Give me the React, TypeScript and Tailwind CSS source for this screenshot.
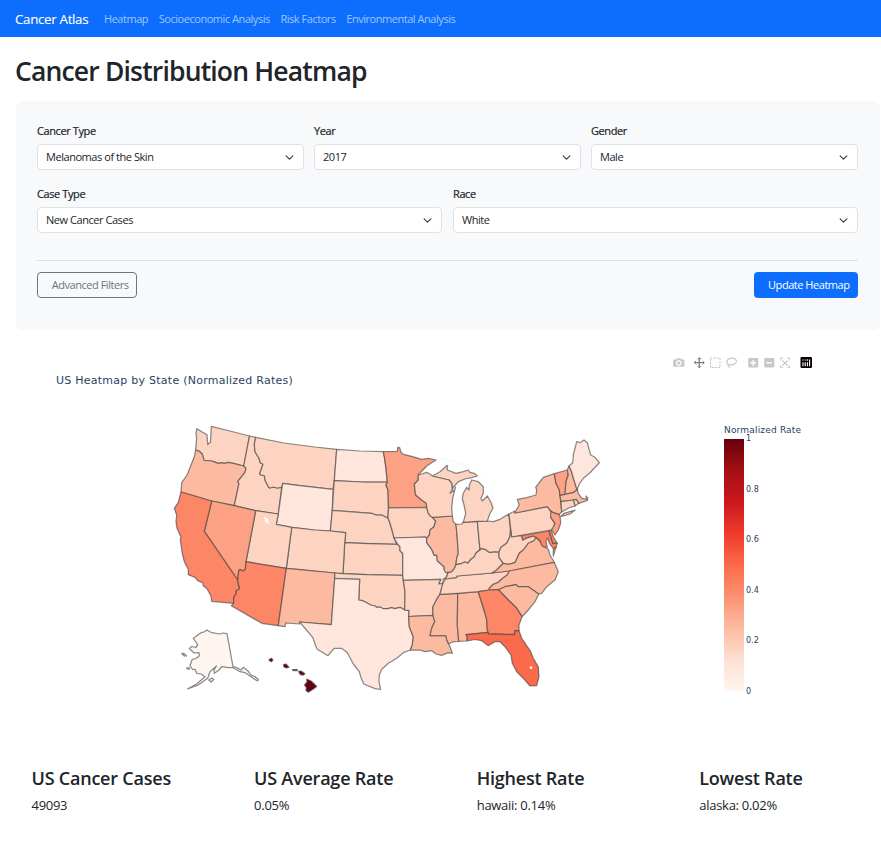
import React from "react";

const UI = "font-['Open_Sans','Segoe_UI',sans-serif]";
const PLOT = "font-['DejaVu_Sans',Verdana,sans-serif]";

const T1 = "#fee6dc";
const T2 = "#fdd3c1";
const T3 = "#fcbaa1";
const T4 = "#fca183";
const T5 = "#fc8666";
const T6 = "#fb6a4a";

const states: [string, string, string][] = [
  ["WA", T2, "196.7,428.7 207,434.7 207.7,444.5 210.5,442 211.3,426.3 230,431 249.5,436 243.7,466 234.3,463.7 228.3,462.3 225,463.3 221.7,462.8 218,463.4 215,462.2 211.7,461 204,460.3 202.3,454.3 199.3,451.3 195.7,450 196,445 196.7,438.3 196,434.3"],
  ["OR", T3, "195.7,450 199.3,451.3 202.3,454.3 204,460.3 211.7,461 215,462.2 218,463.4 221.7,462.8 225,463.3 228.3,462.3 234.3,463.7 243.7,466 246,468.3 245,472.3 237.7,481.7 239,483.3 234.3,505.7 211.7,501 181,492 181.7,482.7 187,475 191,465 194.3,456.7"],
  ["ID", T2, "249.5,436 255.7,437.3 254.3,444.3 255,451.7 259,458.3 260.3,462.7 263,464.3 259.7,473.7 261,475 264.3,475.7 265,480 268.3,486.7 270,488 273.3,487 277,488 281.7,487.3 278.3,514 255.7,510.7 234.3,505.7 239,483.3 237.7,481.7 245,472.3 246,468.3 243.7,466"],
  ["MT", T2, "255.7,437.3 284,443 315,447 336.7,449.3 334.3,480.7 333,489.3 300,485.7 282.7,483.3 281.7,487.3 277,488 273.3,487 270,488 268.3,486.7 265,480 264.3,475.7 261,475 259.7,473.7 263,464.3 260.3,462.7 259,458.3 255,451.7 254.3,444.3"],
  ["WY", T1, "282.7,483.3 300,485.7 333,489.3 332.3,510.3 330.3,531 315,530 291.7,527.3 276.3,524.3 278.3,514"],
  ["ND", T1, "336.7,449.3 360,451 383.3,451.7 384.3,456.7 386,468.3 387.3,482 362.3,482 334.3,480.7"],
  ["SD", T2, "334.3,480.7 362.3,482 387.3,482 386,485 388,490 388.5,507.7 387.7,517.7 386,517.3 381.7,515 376,515 371.7,513.3 332.3,510.3"],
  ["NE", T2, "332.3,510.3 371.7,513.3 376,515 381.7,515 386,517.3 388,517.7 390,523.3 392.5,531.7 394,537.7 396,542.7 397.7,544.3 368.3,543.7 344.7,542.7 345.7,532.7 330.3,531"],
  ["KS", T2, "344.7,542.7 368.3,543.7 397.7,544.3 400,546.7 400,550.7 402.7,553.3 402.7,575.3 366.7,574.7 343,573.7"],
  ["CO", T2, "291.7,527.3 315,530 330.3,531 345.7,532.7 344.7,542.7 343,573.7 334.7,573 300,569.7 286.3,568.3"],
  ["UT", T2, "255.7,510.7 278.3,514 276.3,524.3 291.7,527.3 286.3,568.3 246,561.7"],
  ["NV", T4, "211.7,501 234.3,505.7 255.7,510.7 246,561.7 245.3,569.3 243.3,571 240,569.7 238.7,570.7 237.7,580 204.3,531.3"],
  ["CA", T5, "181,492 211.7,501 204.3,531.3 237.7,580 238.3,584 239.7,588.7 236.3,590.7 236,594 233.7,597.3 233.7,603.3 211.7,601.3 211,596 206.7,588.3 203.3,586 202.7,582.7 197.7,580.7 195,577.3 188.3,574.7 188.3,569.3 184.3,561.7 182.3,553.3 180.3,540 181,537.3 177,528.3 176,521.7 176.7,515 174.3,508.3 178.3,502.3"],
  ["AZ", T5, "246,561.7 286.3,568.3 278.3,625.7 261.7,623.3 231.3,605.7 233.7,603.3 233.7,597.3 236,594 236.3,590.7 239.7,588.7 238.3,584 237.7,580 238.7,570.7 240,569.7 243.3,571 245.3,569.3"],
  ["NM", T3, "286.3,568.3 300,569.7 334.7,573 334.7,578.3 331.3,624.7 299.7,622 299.7,624 285.7,623 285,626.7 278.3,625.7"],
  ["OK", T2, "334.7,573 343,573.7 366.7,574.7 402.7,575.3 403.3,580.3 405,591.7 404.7,610 400,607.3 395,608.7 391,607.6 388.3,608.7 383.3,608.7 380,607 377,607.4 375,606 370.7,605 366.7,602.7 362.7,600.7 358.7,600 359.7,579.3 334.7,578.3"],
  ["TX", T1, "334.7,578.3 359.7,579.3 358.7,600 362.7,600.7 366.7,602.7 370.7,605 375,606 377,607.4 380,607 383.3,608.7 388.3,608.7 391,607.6 395,608.7 400,607.3 404.7,610 409,610.3 408.7,616.7 409.3,626.7 413.3,636.7 412.3,645 410.3,650 403.3,652.7 396.7,658.3 388.3,663.3 381.7,669.3 379.3,675 379,681.7 380.7,689.5 375,688.7 363.7,684 360.7,676.7 359.3,671.7 353.3,664 347.3,652.7 341.7,648.3 334,648.3 328,655.7 317.3,649.3 316,646.7 312.7,637.3 299.7,622 331.3,624.7"],
  ["MN", T4, "383.3,451.7 397.3,451.3 397.7,447.3 399.7,447.7 401,452.3 403.3,454.3 411.7,456.3 421.7,459.3 428.3,458.3 436,460 426.7,466 420.7,472.3 418.3,475 418.3,480 414.3,484.3 415,490 415.7,495 421.7,500 426.3,503.3 426.7,507.3 388.5,508 388,490 386,485 387.3,482 386,468.3 384.3,456.7"],
  ["IA", T2, "388.5,508 426.7,507.3 428,512.7 430,515.7 432.3,517 435.7,521 434,526.7 430,530 429.3,535 426.7,538.3 425,537 394,538 392.5,531.7 390,523.3 388,517.7"],
  ["MO", T1, "394,538 425,537 426.7,538.3 426.7,542.7 431.7,549.3 434,555 436.7,555 437.3,560.7 444,566.7 444.3,570 447.7,572.7 446.7,576.7 443.3,579 442.7,583.5 438.7,584 440.7,579.3 403.3,580.3 402.7,575.3 402.7,553.3 400,550.7 400,546.7 397.7,544.3"],
  ["AR", T2, "403.3,580.3 440.7,579.3 438.7,584 442.7,583.5 442.7,585 440,594 437.3,598.3 432.7,607.3 433,615.3 408.7,616.5 409,610.3 404.7,610 405,591.7"],
  ["LA", T3, "408.7,616.5 433,615.3 434.7,621.7 431.7,628.3 430,635.7 446,635.7 446.7,640 450,646.7 452.3,653.3 448.3,652.7 441.7,655.3 436,654 431.7,650.7 425,651.7 420,650 413.3,650 410.3,650 412.3,645 413.3,636.7 409.3,626.7"],
  ["MS", T3, "440,594.3 457.7,593.3 457.3,625 458.7,641.3 453.3,641.7 450,643.3 448.6,643.6 446.7,640 446,635.7 430,635.7 431.7,628.3 434.7,621.7 433,615.3 432.7,607.3 437.3,598.3"],
  ["AL", T3, "457.7,593.3 478.3,591.7 485,613.3 486.7,619.3 487.3,630 488.3,632.3 466,634.7 467.3,637.3 466.7,641 458.7,641.3 457.3,625"],
  ["TN", T2, "445,579 456,577.7 457.3,576 492,573 509.3,571 507.3,575 502.7,578.3 498.3,582.3 493.3,584.3 489.3,588.3 489.3,590 478.3,591.7 457.7,593.3 440,594.3 442.3,585"],
  ["KY", T2, "445,579 446.7,576.7 448.3,572.3 451.7,571.7 454.3,568.3 456,564.3 461.7,563.3 465,561.7 467.7,563 470.7,559.3 474,556.7 476,552.7 480,550 481,548.3 485,549.3 489.3,552.3 495,551.7 499,552 499,557.3 503.3,563.3 496.7,570 492,573 457.3,576 456,577.7"],
  ["IL", T3, "432.3,517.3 452.3,516 453.3,521.7 456,524.3 457,535 458.3,553.3 456.7,558.3 456,564.3 454.3,568.3 451.7,571.7 448.3,572.3 445.7,572.7 444.3,570 444,566.7 437.3,560.7 436.7,555 434,555 431.7,549.3 426.7,542.7 426.7,538.3 429.3,535 430,530 434,526.7 435.7,521"],
  ["IN", T2, "456,524.3 461.7,524 463.3,522.3 477.3,521.3 480,549.5 476,552.7 474,556.7 470.7,559.3 467.7,563 465,561.7 461.7,563.3 456,564.3 456.7,558.3 458.3,553.3 457,535"],
  ["OH", T2, "477.3,521.3 487.3,521 493.3,521.7 500,519.3 508.7,514 510.5,530 510,536.7 506.7,543.3 501,547.3 499,552 495,551.7 489.3,552.3 485,549.3 481,548.3 480,549.5"],
  ["MI", T2, "471.7,480 478.3,481.7 483.3,486.7 483.3,493.3 481,498.3 482.3,501 487.3,496 490.7,501.7 493,508.3 490,513.3 487.3,521 477.3,521.3 463.3,522.3 465.7,513.3 464,505 462.3,498.3 463.3,493.3 466.7,487.3 469,490 469.3,485"],
  ["MI-UP", T2, "432.3,476 440,471.7 447.3,465.3 447.3,470 456,473.3 463.3,471.7 468.3,470 470,472.3 474,473.3 477.3,476 471.7,477.7 465,479 458.3,481.7 454.3,486 452.3,489.3 451.7,483.3 449,480 438.3,477.5"],
  ["WI", T2, "418.3,475 421.7,474 426.7,472.3 430,474 432.3,476 438.3,477.5 449,480 451.7,483.3 452.3,489.3 450,493.3 454.3,490 455.5,487 452.7,498.3 451.7,508.3 452.3,516 432.3,517.3 430,515.7 428,512.7 426.7,507.3 426.3,503.3 421.7,500 415.7,495 415,490 414.3,484.3 418.3,480"],
  ["PA", T2, "509,514 515,511 515,513 547.3,506.7 550.7,511 553.3,512.7 550.7,517.3 555,523.3 553.3,528.3 550.7,530 511.7,537"],
  ["NY", T3, "515,512.3 519.3,505 517.3,499.3 526.7,497.7 536,495 536.7,490 535.7,487.3 543.3,477.3 554.3,473.7 556,483.3 559.3,490 560.7,501.7 561.7,511.7 559.3,514.7 553.3,512.7 550.7,511 547.3,506.7 515,513"],
  ["NY-LI", T3, "560.7,516.7 564,513.3 575,510 570,514"],
  ["VT", T4, "554.3,473.7 567.3,470 568.3,475 566,481.7 565,494.3 560,495.7 559.3,490 556,483.3"],
  ["NH", T3, "569,466 571,470 576,486.7 577.3,489.3 573.3,492.7 565,494.3 566,481.7 568.3,475 567.3,470"],
  ["ME", T1, "569,466 572.7,462.7 573.3,455 576.7,441.7 580,442.7 584,440 587.3,442.7 590.7,455 595,457.3 599.3,462.7 590,472.7 583.3,478.3 579.3,484 577.3,489.3 576,486.7 571,470"],
  ["MA", T3, "560,495.7 565,494.3 573.3,492.7 577.3,489.3 578.3,493.3 581.7,498.3 586.7,499.3 586,496 587.7,498 587.5,500.5 581.7,502.3 578.8,503.5 576,499.3 573.3,500 561,501.7"],
  ["RI", T2, "573.3,500 576,499.3 579,503 575,506"],
  ["CT", T2, "561,501.7 573.3,500 575,506 570,507.3 561.7,512"],
  ["NJ", T4, "550.7,511 553.3,512.7 559.3,514.7 560.3,518 560.7,523 558.3,530 555,535 551.7,530 555,523.3 550.7,517.3"],
  ["WV", T2, "510.5,530 511.7,537 521.7,535.7 522.7,540 528.3,537.3 533.3,536 536,537.3 534,540.7 528.3,543.3 523.3,550 519.3,553.3 515,562.7 508.3,564.3 503.3,563.3 499,557.3 499,552 501,547.3 506.7,543.3 510,536.7"],
  ["VA", T3, "536,537.3 541.7,543.3 543.3,546.7 548.3,549.3 550,555 554.3,562.3 509.3,571 492,573 496.7,570 503.3,563.3 508.3,564.3 515,562.7 519.3,553.3 523.3,550 528.3,543.3 534,540.7"],
  ["VA-ES", T3, "553.3,549 556,547.3 553.3,556"],
  ["MD", T5, "521.7,535.7 549,531 553,543.5 557.3,543 556,547.3 553.3,548.3 549.3,543.3 547.7,538 546,541 547.3,547.5 541.7,545.5 540,540.5 536,537.3 533.3,536 528.3,537.3 522.7,540"],
  ["DE", T5, "549,531 551,530.3 553.3,536.7 557,543 553,543.7"],
  ["NC", T3, "509.3,571 554.3,562.3 558.3,571.7 555,580 546.7,586.7 541.7,593.3 538.7,594 528.3,586.7 518.3,586.7 516,584.7 505,586.7 498.7,589.7 489.3,590 489.3,588.3 493.3,584.3 498.3,582.3 502.7,578.3 507.3,575"],
  ["SC", T3, "498.7,589.7 505,586.7 516,584.7 518.3,586.7 528.3,586.7 538.7,594 535,601.7 528.3,610 522,616.7 516.7,608.3 508.3,600 501.7,593.3"],
  ["GA", T5, "478.3,591.7 489.3,590 498.7,589.7 501.7,593.3 508.3,600 516.7,608.3 522,616.7 519,625 519,630.7 515,630.7 514.3,634.7 488.3,633.5 487.3,630 486.7,619.3 485,613.3"],
  ["FL", T6, "466,634.7 488.3,632.3 488.3,633.8 514.3,634.7 515,630.7 519,630.7 521.7,638.3 530.7,651.7 533.3,658.3 538.3,666.7 539,676.7 536.7,685.7 530,686 525,680 516.7,671.7 512.3,663.3 511,655 505,646.7 500,641.7 495,641.7 488.3,645.7 481.7,640.7 475,639.5 467.3,641 467.3,637.3"],
  ["AK", "#fff5f0", "201,632.7 204,632 206.7,630 211.7,632.7 220,634 223,633 227,633.7 233,666.7 236.7,667.5 241,670 243.3,667.3 248.3,671.3 251,675 255,676.7 258.3,679.3 257.5,681 254.5,679.3 250,676 245,672.7 240,671.7 233.3,667.7 228.3,667.7 221.7,666.7 219,670 214.3,673.3 214,670 216.5,666 212,670 210,671.7 207.7,678.3 198.3,685 187.7,688.9 196.7,684 205,676.7 201,674 196.7,673.3 195,669.3 192.5,669.5 190,665.5 192.3,659.3 196,658.5 199.3,655.7 199,652.7 194,653 189.3,648.5 191.7,646.5 195.7,647.5 197.7,645 196,642 193.3,638.3"],
  ["AK-1", "#fff5f0", "181.7,653.5 183.5,653.3 186.5,656 184,655.8"],
  ["AK-2", "#fff5f0", "186.5,668 189,667.5 189.5,669 187.5,669"],
  ["AK-3", "#fff5f0", "208.7,680 212,678 213.8,679.5 211,682"],
  ["HI-1", "#67000d", "269,659.5 271.5,658.3 273,660 271.5,661.8 269.5,660.8"],
  ["HI-2", "#67000d", "283.5,664.5 286,664 289,667.2 286.5,668 284,667"],
  ["HI-3", "#67000d", "292.5,669.6 297.3,669.6 297.3,670.6 293,670.6"],
  ["HI-4", "#67000d", "298.5,671.4 301,671 305,673.8 303,675.2 300.3,674.6"],
  ["HI-5", "#67000d", "306.7,679 311.5,681.2 316.7,686.5 313,689.3 308.3,692.3 306,690.5 306.3,687.5 304.5,685 307,682"],
];

function UsMap() {
  return (
    <svg className="block h-[280px] w-[440px]" viewBox="170 420 440 280" strokeLinejoin="round">
      <path
        d="M436,460 442,458 455,462 468,466 477,475 487,483 492,493 493,508M487,521 493,522 509,514 519,505M411,655 431,652"
        fill="none"
        stroke="#f3f3f3"
        strokeWidth="0.8"
      />
      {states.map(([id, fill, points]) => (
        <polygon key={id} points={points} fill={fill} stroke="#444" strokeWidth="1.25" strokeOpacity="0.62" />
      ))}
      <path d="M264,516 268.3,519.5 268.7,524.5 265,521Z" fill="#fff" />
      <circle cx="531" cy="667.7" r="1.4" fill="#fff" />
    </svg>
  );
}

function Select({ label, value }: { label: string; value: string }) {
  return (
    <div className="min-w-0 flex-1">
      <div className="h-[21px] text-[11px] leading-[16px] font-medium tracking-[-0.4px] text-[#212529] [-webkit-text-stroke:0.2px_#212529]">{label}</div>
      <div className="flex h-[26px] items-center justify-between rounded-[4px] border border-[#dee2e6] bg-white pr-[9px] pl-2 text-[11px] tracking-[-0.45px] text-[#212529]">
        <span>{value}</span>
        <svg width="9" height="9" viewBox="0 0 16 16" fill="none" stroke="#343a40" strokeWidth="2" strokeLinecap="round" strokeLinejoin="round">
          <path d="m2 5 6 6 6-6" />
        </svg>
      </div>
    </div>
  );
}

function ModeBar() {
  return (
    <svg className="block" width="142" height="14" viewBox="672 356 142 14">
      <g fill="#c8c8c8">
        <path fillRule="evenodd" d="M674 359.5h2l1-1.3h3.6l1 1.3h2a.8.8 0 0 1 .8.8v5.6a.8.8 0 0 1-.8.8H674a.8.8 0 0 1-.8-.8v-5.6a.8.8 0 0 1 .8-.8ZM678.8 360.3a2.8 2.8 0 1 0 0 5.6 2.8 2.8 0 0 0 0-5.6Z" />
        <circle cx="678.8" cy="363.1" r="1.7" />
        <path fillRule="evenodd" d="M749 358h8.5a.8.8 0 0 1 .8.8v8a.8.8 0 0 1-.8.8H749a.8.8 0 0 1-.8-.8v-8a.8.8 0 0 1 .8-.8Zm3.5 2v2.1h-2.2v1.5h2.2v2.1h1.5v-2.1h2.2v-1.5H754V360Z" />
        <path fillRule="evenodd" d="M765 358h8.5a.8.8 0 0 1 .8.8v8a.8.8 0 0 1-.8.8H765a.8.8 0 0 1-.8-.8v-8a.8.8 0 0 1 .8-.8Zm1.5 4.1v1.5h5.5v-1.5Z" />
      </g>
      <g fill="none" stroke="#7c7c7c" strokeWidth="1.3">
        <path d="M699.3 358v9.5M694.5 362.7h9.6" />
        <path strokeWidth="1" d="m697.6 359.3 1.7-1.7 1.7 1.7M697.6 366.1l1.7 1.7 1.7-1.7M696 361l-1.7 1.7 1.7 1.7M702.6 361l1.7 1.7-1.7 1.7" />
      </g>
      <rect x="710.5" y="358" width="9.5" height="9.5" fill="none" stroke="#b8b8b8" strokeDasharray="1.8 1.4" />
      <g fill="none" stroke="#c8c8c8" strokeWidth="1.2">
        <path d="M728.3 364.4c-3.2-2.4-1-6.2 3.2-6.2 3 0 4.9 1.4 4.9 3.2 0 2.3-3.3 3.8-6.4 3.3-1.3-.3-2.2.5-1.7 1.5.4.7 1.5.4 1.5 1.5" />
        <path d="m782.3 360.3 5.4 5.4M787.7 360.3l-5.4 5.4" />
        <path strokeWidth="1" d="M780.5 360.3v-2.3h2.3M787.2 358h2.3v2.3M780.5 365.2v2.3h2.3M787.2 367.5h2.3v-2.3" />
      </g>
      <rect x="800.5" y="357" width="11.5" height="11" rx="1.3" fill="#000" />
      <g stroke="#fff" strokeWidth="1.1">
        <path d="M803 362.3v3.9M805.2 362.3v3.9M807.4 362.3v3.9M809.6 359.5v6.7" />
      </g>
      <circle cx="803" cy="360.1" r=".8" fill="#e763fa" />
      <circle cx="805.2" cy="360.1" r=".8" fill="#ff5b6e" />
      <circle cx="807.4" cy="360.1" r=".8" fill="#fff" />
    </svg>
  );
}

const ticks = ["1", "0.8", "0.6", "0.4", "0.2", "0"];

function ColorBar() {
  return (
    <div className="w-[84px]">
      <div className="h-[16px] pt-px text-[9px] leading-[12px] tracking-[0.18px] whitespace-nowrap text-[#2a3f5f]">Normalized Rate</div>
      <div className="flex gap-[2px]">
        <div className="h-[252px] w-[20px] bg-[linear-gradient(to_top,#fff5f0_0%,#fee0d2_12.5%,#fcbba1_25%,#fc9272_37.5%,#fb6a4a_50%,#ef3b2c_62.5%,#cb181d_75%,#a50f15_87.5%,#67000d_100%)]" />
        <div className="-mt-[6px] flex h-[265px] flex-col justify-between text-[8px] leading-[12px] text-[#2a3f5f]">
          {ticks.map((t) => (
            <span key={t}>{t}</span>
          ))}
        </div>
      </div>
    </div>
  );
}

const stats = [
  ["US Cancer Cases", "49093"],
  ["US Average Rate", "0.05%"],
  ["Highest Rate", "hawaii: 0.14%"],
  ["Lowest Rate", "alaska: 0.02%"],
];

export default function App() {
  return (
    <div className={`h-[848px] w-[881px] overflow-hidden bg-white text-[#212529] ${UI}`}>
      <nav className="flex h-[37px] items-center bg-[#0d6efd] pt-px pl-[15px] text-[11px] text-white/60">
        <span className="mr-[16px] w-[73px] text-[13.4px] tracking-[-0.35px] whitespace-nowrap text-white [-webkit-text-stroke:0.1px_#fff]">Cancer Atlas</span>
        <div className="flex gap-[10.6px] tracking-[-0.46px] whitespace-nowrap">
          <span>Heatmap</span>
          <span>Socioeconomic Analysis</span>
          <span>Risk Factors</span>
          <span>Environmental Analysis</span>
        </div>
      </nav>
      <h1 className="h-[64px] pt-[17px] pl-[15px] text-[26.5px] leading-[34px] font-semibold tracking-[-0.83px] whitespace-nowrap">Cancer Distribution Heatmap</h1>
      <section className="ml-4 h-[229px] w-[864px] rounded-[7px] bg-[#f8f9fb] px-[21px] pt-[22px]">
        <div className="flex w-[821px] gap-[10px]">
          <Select label="Cancer Type" value="Melanomas of the Skin" />
          <Select label="Year" value="2017" />
          <Select label="Gender" value="Male" />
        </div>
        <div className="mt-4 flex w-[821px] gap-[11px]">
          <Select label="Case Type" value="New Cancer Cases" />
          <Select label="Race" value="White" />
        </div>
        <div className="mt-[27px] flex w-[821px] justify-between border-t border-[#dee2e6] pt-[11px] text-[11px] tracking-[-0.46px]">
          <button className="h-[26px] w-[100px] rounded-[4px] border border-[#6c757d] pr-[7.5px] text-right whitespace-nowrap text-[#6c757d]">Advanced Filters</button>
          <button className="h-[26px] w-[104px] rounded-[4px] bg-[#0d6efd] pr-[8.5px] text-right whitespace-nowrap text-white">Update Heatmap</button>
        </div>
      </section>
      <section className={`h-[435px] pt-[26px] ${PLOT}`}>
        <div className="pl-[672px]">
          <ModeBar />
        </div>
        <div className="mt-[3px] h-[15px] pl-14 text-[11px] leading-[15px] tracking-[0.25px] whitespace-nowrap text-[#2a3f5f]">US Heatmap by State (Normalized Rates)</div>
        <div className="mt-[32px] flex pl-[170px]">
          <UsMap />
          <div className="ml-[114px] pt-[3px]">
            <ColorBar />
          </div>
        </div>
      </section>
      <div className="flex pl-[31.5px]">
        {stats.map(([title, value]) => (
          <div key={title} className="w-[222.6px] shrink-0">
            <div className="text-[18px] leading-[26px] font-semibold tracking-[-0.22px] whitespace-nowrap">{title}</div>
            <div className="mt-[4px] text-[13px] leading-[20px] tracking-[-0.28px] whitespace-nowrap">{value}</div>
          </div>
        ))}
      </div>
    </div>
  );
}
